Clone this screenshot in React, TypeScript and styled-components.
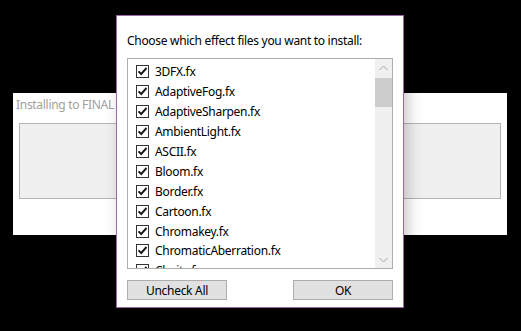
import React, { useState } from 'react';
import styled, { createGlobalStyle } from 'styled-components';

const GlobalStyle = createGlobalStyle`
  html, body {
    margin: 0;
    padding: 0;
    background: #000;
    width: 521px;
    height: 331px;
    overflow: hidden;
  }
  #root {
    position: relative;
    width: 521px;
    height: 331px;
  }
`;

const FILES = [
  '3DFX.fx',
  'AdaptiveFog.fx',
  'AdaptiveSharpen.fx',
  'AmbientLight.fx',
  'ASCII.fx',
  'Bloom.fx',
  'Border.fx',
  'Cartoon.fx',
  'Chromakey.fx',
  'ChromaticAberration.fx',
  'Clarity.fx',
];

const font = `"Segoe UI", "Noto Sans", "Liberation Sans", sans-serif`;

const Page = styled.div`
  padding: 93px 0 0 13px;
`;

const BackWindow = styled.div`
  width: 494px;
  height: 142px;
  background: #fff;
  box-sizing: border-box;
  padding: 4px 6px 0 6px;
  font-family: ${font};
  letter-spacing: -0.3px;
`;

const BackTitle = styled.div`
  font-size: 12px;
  color: #a0a0a0;
  line-height: 16px;
  margin-left: -3px;
  white-space: nowrap;
`;

const ProgressBox = styled.div`
  margin-top: 10px;
  height: 74px;
  background: #f0f0f0;
  border: 1px solid #b4b4b4;
`;

const Dialog = styled.div`
  position: absolute;
  left: 116px;
  top: 15px;
  width: 288px;
  height: 293px;
  box-sizing: border-box;
  background: #fff;
  border: 1px solid #9a6aa8;
  box-shadow: 4px 0 14px rgba(0, 0, 0, 0.22);
  padding: 17px 10px 0 10px;
  display: flex;
  flex-direction: column;
  font-family: ${font};
  letter-spacing: -0.3px;
`;

const Prompt = styled.div`
  font-size: 12px;
  line-height: 16px;
  color: #000;
  white-space: nowrap;
`;

const ListBox = styled.div`
  margin-top: 9px;
  height: 209px;
  flex-shrink: 0;
  border: 1px solid #adadad;
  display: flex;
  overflow: hidden;
`;

const Items = styled.div`
  flex: 1;
  padding: 3px 0 0 8px;
  overflow: hidden;
`;

const Row = styled.label`
  display: flex;
  align-items: center;
  height: 19.9px;
  font-size: 12px;
  color: #000;
  gap: 6px;
  cursor: default;
  white-space: nowrap;
`;

const Box = styled.span<{ $on: boolean }>`
  width: 13px;
  height: 13px;
  box-sizing: border-box;
  border: 1px solid #333;
  background: #fff;
  display: flex;
  align-items: center;
  justify-content: center;
  flex-shrink: 0;
  svg {
    visibility: ${(p) => (p.$on ? 'visible' : 'hidden')};
  }
`;

const ScrollBar = styled.div`
  width: 17px;
  background: #f0f0f0;
  display: flex;
  flex-direction: column;
`;

const Arrow = styled.div`
  height: 17px;
  display: flex;
  align-items: center;
  justify-content: center;
`;

const Track = styled.div`
  flex: 1;
  display: flex;
  flex-direction: column;
`;

const Thumb = styled.div`
  margin-top: 2px;
  height: 29px;
  background: #cdcdcd;
`;

const Buttons = styled.div`
  display: flex;
  justify-content: space-between;
  margin-top: 11px;
`;

const Button = styled.button`
  width: 100px;
  height: 20px;
  box-sizing: border-box;
  background: #e1e1e1;
  border: 1px solid #adadad;
  font-family: ${font};
  font-size: 12px;
  letter-spacing: -0.3px;
  color: #000;
  padding: 0;
`;

const Check = () => (
  <svg width="11" height="11" viewBox="0 0 11 11">
    <path d="M1.5 5.3 L4.2 8 L9.5 2" fill="none" stroke="#1a1a1a" strokeWidth="1.9" />
  </svg>
);

const Chevron = ({ up }: { up?: boolean }) => (
  <svg width="9" height="6" viewBox="0 0 9 6">
    <path d={up ? 'M0.5 5 L4.5 1 L8.5 5' : 'M0.5 1 L4.5 5 L8.5 1'} fill="none" stroke="#a3a3a3" strokeWidth="1" />
  </svg>
);

export default function App() {
  const [checked, setChecked] = useState<boolean[]>(FILES.map(() => true));

  const toggle = (i: number) => {
    setChecked((c) => c.map((v, j) => (j === i ? !v : v)));
  };

  return (
    <>
      <GlobalStyle />
      <Page>
        <BackWindow>
          <BackTitle>Installing to FINAL FANTASY XV...</BackTitle>
          <ProgressBox />
        </BackWindow>
      </Page>
      <Dialog>
        <Prompt>Choose which effect files you want to install:</Prompt>
        <ListBox>
          <Items>
            {FILES.map((f, i) => (
              <Row key={f} onClick={() => toggle(i)}>
                <Box $on={checked[i]}>
                  <Check />
                </Box>
                {f}
              </Row>
            ))}
          </Items>
          <ScrollBar>
            <Arrow>
              <Chevron up />
            </Arrow>
            <Track>
              <Thumb />
            </Track>
            <Arrow>
              <Chevron />
            </Arrow>
          </ScrollBar>
        </ListBox>
        <Buttons>
          <Button onClick={() => setChecked(FILES.map(() => false))}>Uncheck All</Button>
          <Button>OK</Button>
        </Buttons>
      </Dialog>
    </>
  );
}
